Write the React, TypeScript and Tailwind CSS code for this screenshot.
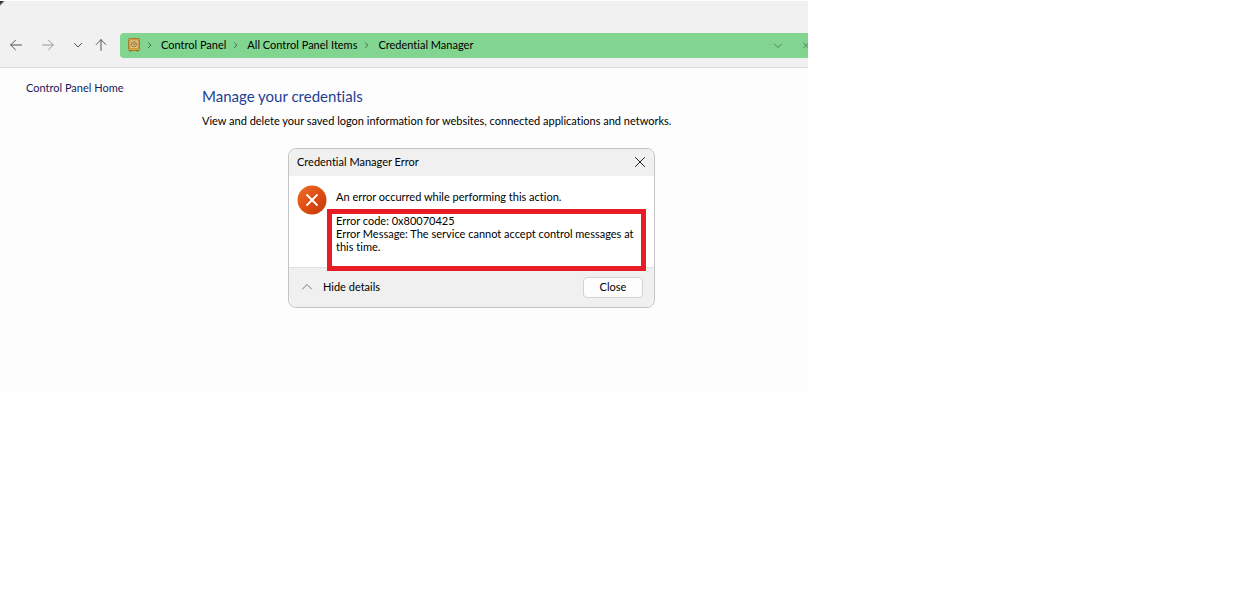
import { useState } from 'react';
import type { ReactNode } from 'react';

type IconProps = {
  className?: string;
  children: ReactNode;
};

const CRUMBS = ['Control Panel', 'All Control Panel Items', 'Credential Manager'];

const Icon = ({ className = '', children }: IconProps) => (
  <svg
    viewBox="0 0 12 12"
    fill="none"
    stroke="currentColor"
    strokeLinecap="round"
    strokeLinejoin="round"
    aria-hidden="true"
    className={`block size-3 shrink-0 ${className}`}
  >
    {children}
  </svg>
);

const SafeIcon = () => (
  <svg viewBox="0 0 12 14" aria-hidden="true" className="block h-3.5 w-3 shrink-0">
    <rect x="0.5" y="0.5" width="11" height="12" rx="1" fill="#d9a846" stroke="#a67c33" />
    <rect x="2" y="2" width="8" height="8.5" fill="#e8c97c" stroke="#b08335" strokeWidth="0.6" />
    <circle cx="6" cy="6.3" r="2.6" fill="#d8c08a" stroke="#7d6433" strokeWidth="0.8" />
    <path d="M4.8 5.2 6 6.6l1.6-.8" fill="none" stroke="#6d5628" strokeWidth="0.9" />
    <path d="M1.5 13h2M8.5 13h2" stroke="#7d6433" />
  </svg>
);

const ErrorIcon = () => (
  <svg viewBox="0 0 30 30" role="img" aria-label="Error" className="block size-[30px] shrink-0">
    <defs>
      <linearGradient id="error-fill" x1="0" y1="0" x2="1" y2="1">
        <stop offset="0" stopColor="#f0702c" />
        <stop offset="0.5" stopColor="#df4d12" />
        <stop offset="1" stopColor="#c13a08" />
      </linearGradient>
    </defs>
    <circle cx="15" cy="15" r="14.5" fill="url(#error-fill)" />
    <path d="m10 10 10 10M20 10 10 20" stroke="#fff" strokeWidth="1.8" strokeLinecap="round" />
  </svg>
);

const Toolbar = () => (
  <header className="flex items-center border-b border-[#dadada] bg-[linear-gradient(135deg,#333_2px,#f1f1f1_4px)] pt-8 pb-[9px]">
    <nav aria-label="History" className="flex w-[120px] shrink-0 items-center pb-px pl-[10px] text-[#555]">
      <button type="button" aria-label="Back">
        <Icon>
          <path d="M11.5 6H.7M5.5 1.2.7 6l4.8 4.8" />
        </Icon>
      </button>
      <button type="button" aria-label="Forward" className="ml-5 text-[#999]">
        <Icon>
          <path d="M.5 6h10.8M6.5 1.2 11.3 6l-4.8 4.8" />
        </Icon>
      </button>
      <button type="button" aria-label="Recent locations" className="ml-[18px]">
        <Icon>
          <path d="M2.5 4.5 6 8l3.5-3.5" />
        </Icon>
      </button>
      <button type="button" aria-label="Up" className="ml-[11px]">
        <Icon>
          <path d="M6 11.5V.7M1.2 5.5 6 .7l4.8 4.8" />
        </Icon>
      </button>
    </nav>

    <div className="flex h-[25px] min-w-0 flex-1 items-center rounded-l-sm bg-[#82d590] pb-0.5 pl-2">
      <SafeIcon />
      <ol className="flex items-center pl-1">
        {CRUMBS.map((crumb) => (
          <li key={crumb} className="flex items-center whitespace-nowrap">
            <Icon className="text-[#43654a]">
              <path d="M4.5 3.8 6.8 6.2 4.5 8.6" />
            </Icon>
            <a href="#" className="pr-1 pl-[5px]">
              {crumb}
            </a>
          </li>
        ))}
      </ol>
      <div className="ml-auto flex items-center gap-4 text-[#55805d]">
        <button type="button" aria-label="Previous locations">
          <Icon>
            <path d="M2.5 5 6 8.5 9.5 5" />
          </Icon>
        </button>
        <button type="button" aria-label="Stop" className="w-2 overflow-hidden">
          <Icon>
            <path d="m3.5 4 5 5M8.5 4l-5 5" />
          </Icon>
        </button>
      </div>
    </div>
  </header>
);

const ErrorDialog = () => {
  const [showDetails, setShowDetails] = useState(true);

  return (
    <section
      role="dialog"
      aria-labelledby="dialog-title"
      className="w-full max-w-[367px] rounded-lg border border-[#c4c4c4] bg-white"
    >
      <div className="flex h-[27px] items-center justify-between rounded-t-lg bg-[#f0f0f0] px-2 pb-px">
        <h2 id="dialog-title">Credential Manager Error</h2>
        <button type="button" aria-label="Close dialog" className="text-[#222]">
          <Icon>
            <path d="m1.5 1.5 9 9M10.5 1.5l-9 9" />
          </Icon>
        </button>
      </div>

      <div className="flex min-h-[91px] px-2 pt-[9px]">
        <ErrorIcon />
        <div className="min-w-0 flex-1">
          <p className="h-6 pt-1 pl-[9px]">An error occurred while performing this action.</p>
          {showDetails && (
            <div className="relative -mb-1 h-[62px] border-5 border-[#e81c24] bg-white px-1 leading-[13px]">
              <p>Error code: 0x80070425</p>
              <p>Error Message: The service cannot accept control messages at this time.</p>
            </div>
          )}
        </div>
      </div>

      <div className="flex h-10 items-center justify-between rounded-b-lg border-t border-[#e0e0e0] bg-[#f0f0f0] pr-[11px] pb-px pl-3">
        <button
          type="button"
          aria-expanded={showDetails}
          onClick={() => setShowDetails(!showDetails)}
          className="flex items-center gap-[10px]"
        >
          <Icon className="text-[#777]">
            <path d="M1.5 8 6 3.5 10.5 8" />
          </Icon>
          {showDetails ? 'Hide details' : 'Show details'}
        </button>
        <button type="button" className="h-[21px] w-[60px] rounded border border-[#d2d2d2] bg-[#fdfdfd]">
          Close
        </button>
      </div>
    </section>
  );
};

const App = () => (
  <div className="min-h-screen bg-white font-[Lato,'Open_Sans',sans-serif] text-[11px] leading-4 text-black [font-variant-ligatures:none]">
    <div className="min-h-[391px] w-full max-w-[808px] overflow-hidden bg-[#fdfdfd] pt-px">
      <Toolbar />
      <div className="flex">
        <aside className="w-[202px] shrink-0 pt-3 pl-[26px]">
          <a href="#" className="text-[#1a1a5c]">
            Control Panel Home
          </a>
        </aside>
        <main className="min-w-0 flex-1 pt-[18px]">
          <h1 className="text-[15px] leading-5 text-[#1f3f94]">Manage your credentials</h1>
          <p className="mt-[7px]">
            View and delete your saved logon information for websites, connected applications and networks.
          </p>
          <div className="mt-[19px] pl-[86px]">
            <ErrorDialog />
          </div>
        </main>
      </div>
    </div>
  </div>
);

export default App;
